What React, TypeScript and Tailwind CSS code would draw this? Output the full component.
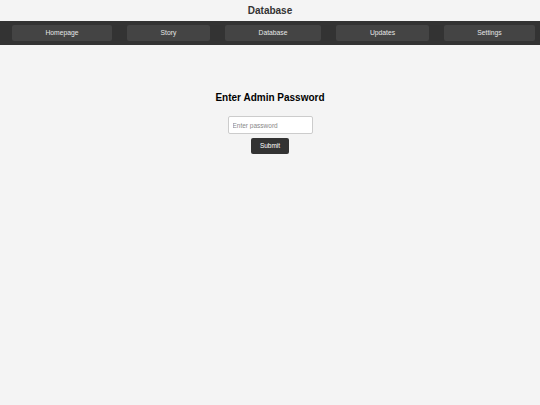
import React from "react";

const items = [
  { label: "Homepage", w: "w-[100px]" },
  { label: "Story", w: "w-[83px]" },
  { label: "Database", w: "w-[96px]" },
  { label: "Updates", w: "w-[93px]" },
  { label: "Settings", w: "w-[91px]" },
];

export default function App() {
  return (
    <div className="min-h-screen bg-[#f4f4f4] font-['Liberation_Sans',Arial,sans-serif]">
      <header className="h-[21px] flex items-center justify-center text-[10px] font-bold text-[#333]">
        Database
      </header>
      <nav className="h-[24px] bg-[#333] flex items-center pl-[12px] pr-[4px] gap-[15px]">
        {items.map((it) => (
          <button
            key={it.label}
            className={`${it.w} h-[16px] bg-[#444] text-[#e6e6e6] text-[6.75px] rounded-[2px] flex items-center justify-center`}
          >
            {it.label}
          </button>
        ))}
      </nav>
      <main className="flex flex-col items-center pt-[47px]">
        <h2 className="text-[10px] leading-[12px] font-bold text-black">Enter Admin Password</h2>
        <input
          type="password"
          placeholder="Enter password"
          className="mt-[12px] w-[85px] h-[18px] bg-white border border-[#ccc] rounded-[2px] px-[4px] text-[6.5px] placeholder:text-[#888] outline-none"
        />
        <button className="mt-[4px] w-[38px] h-[16px] bg-[#333] text-white text-[6.5px] rounded-[2px] flex items-center justify-center">
          Submit
        </button>
      </main>
    </div>
  );
}
